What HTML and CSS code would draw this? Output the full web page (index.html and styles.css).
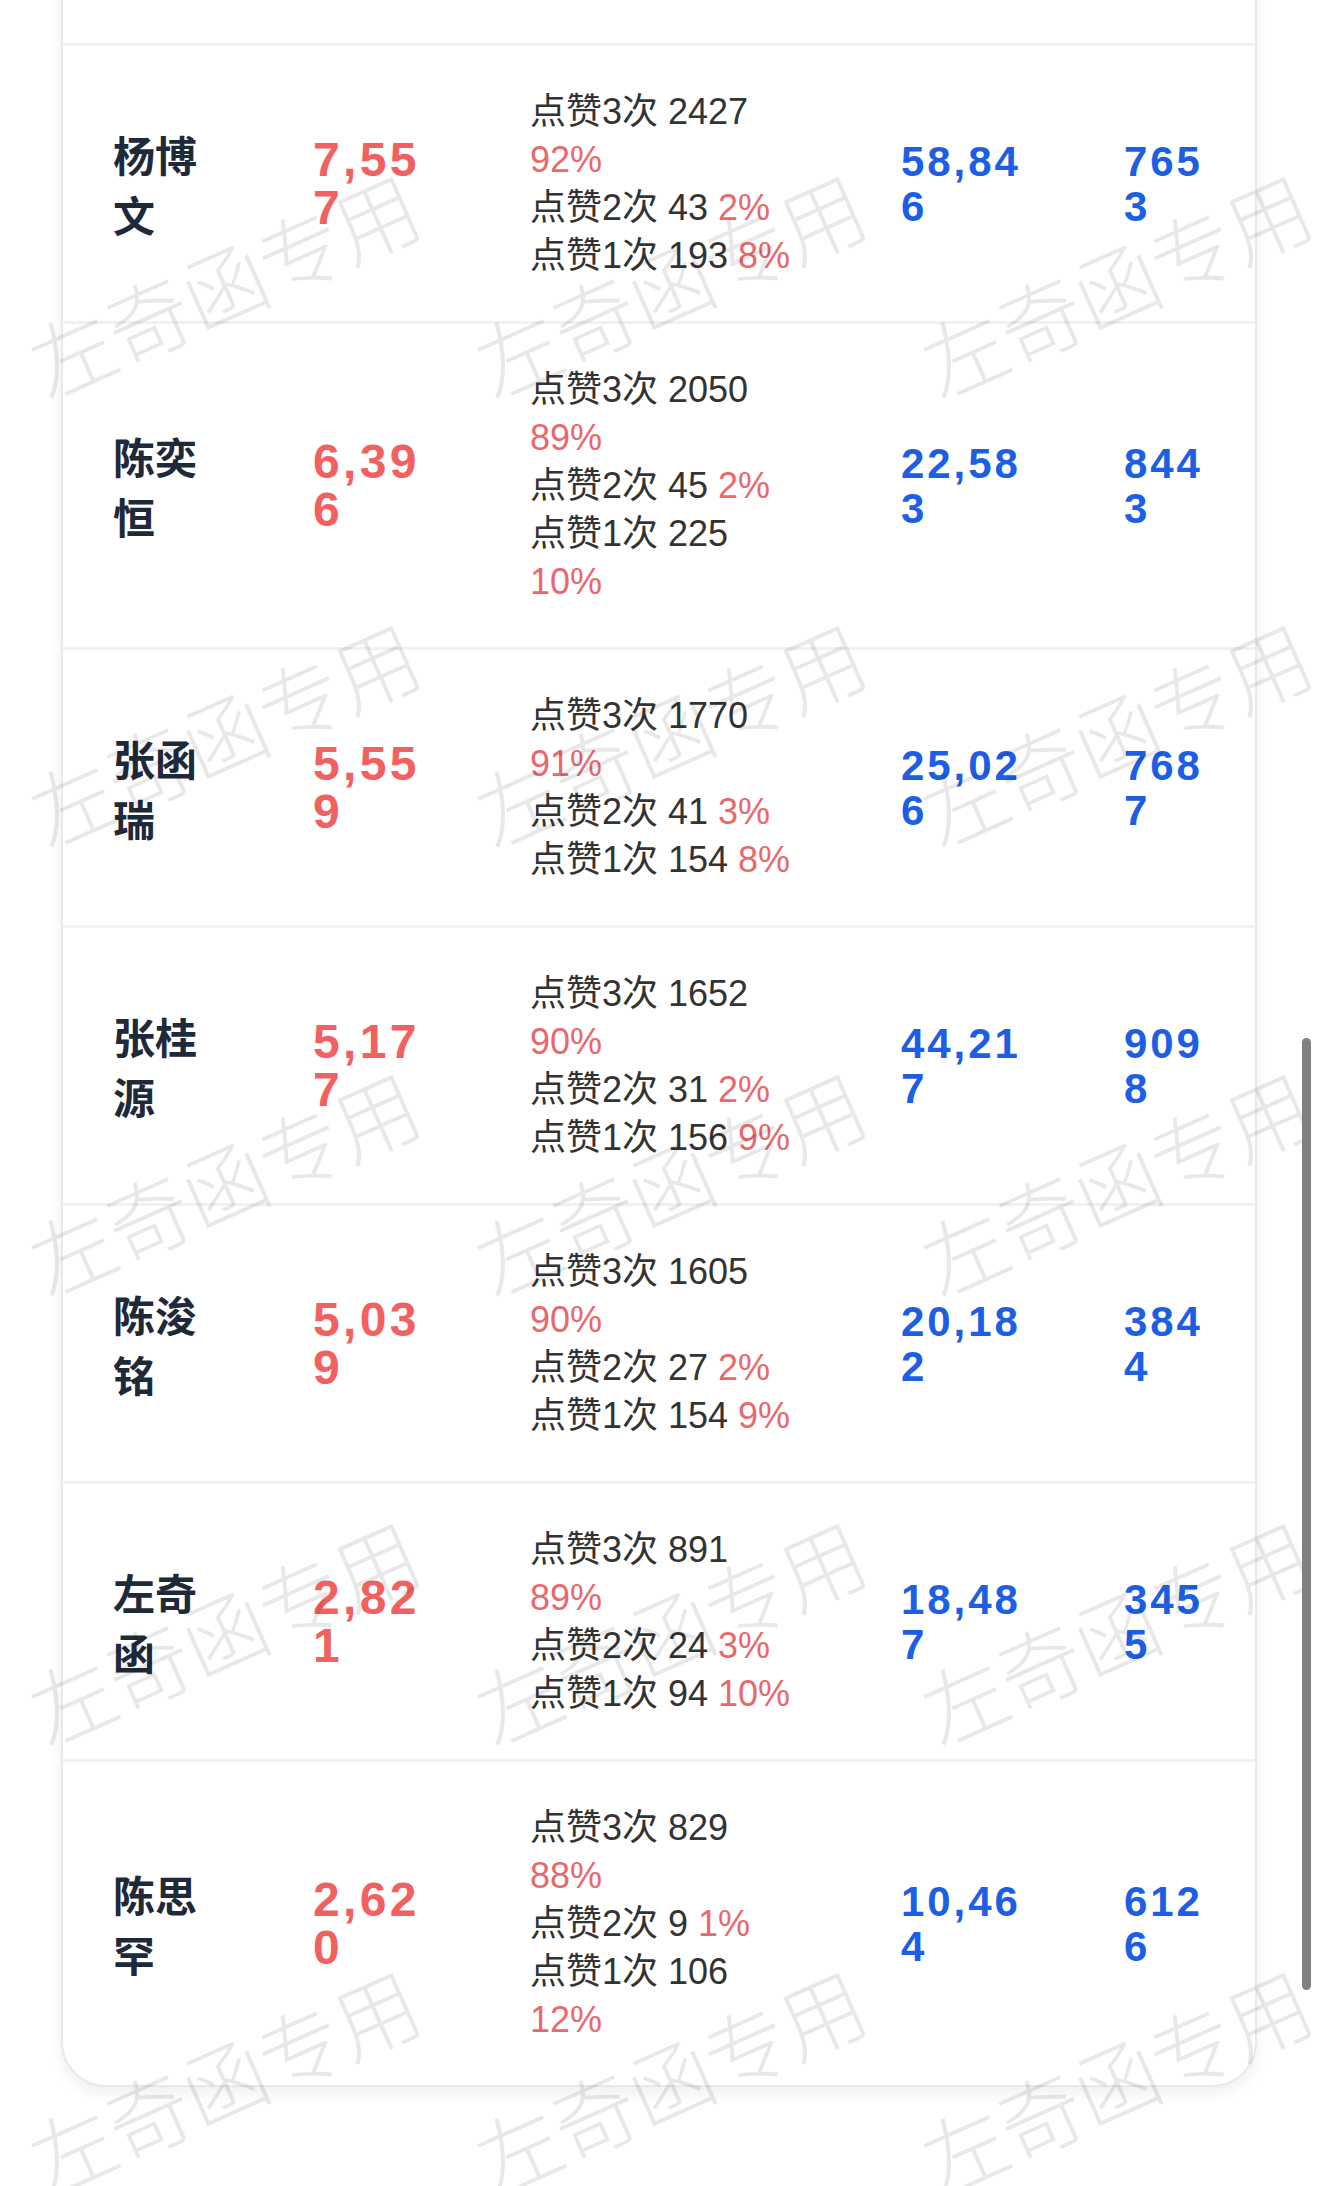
FILE: index.html
```html
<!DOCTYPE html>
<html lang="zh-CN">

<head>
    <meta charset="UTF-8">
    <meta name="viewport" content="width=device-width, initial-scale=1.0">
    <title>点赞统计</title>
    <link rel="stylesheet" href="styles.css">
</head>

<body>
    <div class="page">
        <div class="card">
            <!-- forrige rad, rullet ut av bildet -->
            <div class="row row-cut"></div>

            <div class="row">
                <div class="name">杨博文</div>
                <div class="score">7,557</div>
                <div class="likes">
                    <div>点赞3次 2427 <span class="pct">92%</span></div>
                    <div>点赞2次 43 <span class="pct">2%</span></div>
                    <div>点赞1次 193 <span class="pct">8%</span></div>
                </div>
                <div class="num views">58,846</div>
                <div class="num fans">7653</div>
            </div>

            <div class="row">
                <div class="name">陈奕恒</div>
                <div class="score">6,396</div>
                <div class="likes">
                    <div>点赞3次 2050 <span class="pct">89%</span></div>
                    <div>点赞2次 45 <span class="pct">2%</span></div>
                    <div>点赞1次 225 <span class="pct">10%</span></div>
                </div>
                <div class="num views">22,583</div>
                <div class="num fans">8443</div>
            </div>

            <div class="row">
                <div class="name">张函瑞</div>
                <div class="score">5,559</div>
                <div class="likes">
                    <div>点赞3次 1770 <span class="pct">91%</span></div>
                    <div>点赞2次 41 <span class="pct">3%</span></div>
                    <div>点赞1次 154 <span class="pct">8%</span></div>
                </div>
                <div class="num views">25,026</div>
                <div class="num fans">7687</div>
            </div>

            <div class="row">
                <div class="name">张桂源</div>
                <div class="score">5,177</div>
                <div class="likes">
                    <div>点赞3次 1652 <span class="pct">90%</span></div>
                    <div>点赞2次 31 <span class="pct">2%</span></div>
                    <div>点赞1次 156 <span class="pct">9%</span></div>
                </div>
                <div class="num views">44,217</div>
                <div class="num fans">9098</div>
            </div>

            <div class="row">
                <div class="name">陈浚铭</div>
                <div class="score">5,039</div>
                <div class="likes">
                    <div>点赞3次 1605 <span class="pct">90%</span></div>
                    <div>点赞2次 27 <span class="pct">2%</span></div>
                    <div>点赞1次 154 <span class="pct">9%</span></div>
                </div>
                <div class="num views">20,182</div>
                <div class="num fans">3844</div>
            </div>

            <div class="row">
                <div class="name">左奇函</div>
                <div class="score">2,821</div>
                <div class="likes">
                    <div>点赞3次 891 <span class="pct">89%</span></div>
                    <div>点赞2次 24 <span class="pct">3%</span></div>
                    <div>点赞1次 94 <span class="pct">10%</span></div>
                </div>
                <div class="num views">18,487</div>
                <div class="num fans">3455</div>
            </div>

            <div class="row">
                <div class="name">陈思罕</div>
                <div class="score">2,620</div>
                <div class="likes">
                    <div>点赞3次 829 <span class="pct">88%</span></div>
                    <div>点赞2次 9 <span class="pct">1%</span></div>
                    <div>点赞1次 106 <span class="pct">12%</span></div>
                </div>
                <div class="num views">10,464</div>
                <div class="num fans">6126</div>
            </div>
        </div>

        <!-- vannmerke over hele siden -->
        <div class="watermarks">
            <div class="wm"><span>左奇函专用</span></div>
            <div class="wm"><span>左奇函专用</span></div>
            <div class="wm"><span>左奇函专用</span></div>
            <div class="wm"><span>左奇函专用</span></div>
            <div class="wm"><span>左奇函专用</span></div>
            <div class="wm"><span>左奇函专用</span></div>
            <div class="wm"><span>左奇函专用</span></div>
            <div class="wm"><span>左奇函专用</span></div>
            <div class="wm"><span>左奇函专用</span></div>
            <div class="wm"><span>左奇函专用</span></div>
            <div class="wm"><span>左奇函专用</span></div>
            <div class="wm"><span>左奇函专用</span></div>
            <div class="wm"><span>左奇函专用</span></div>
            <div class="wm"><span>左奇函专用</span></div>
            <div class="wm"><span>左奇函专用</span></div>
        </div>

        <div class="scrollbar"></div>
    </div>
</body>

</html>
```

FILE: styles.css
```css
body {
    margin: 0;
    background: #ffffff;
    font-family: "Liberation Sans", "Noto Sans CJK SC", sans-serif;
}

.page {
    position: relative;
    height: 2186px;
    overflow: hidden;
    padding-left: 61px;
}

.card {
    width: 1192px;
    margin-top: -97px;
    background: #ffffff;
    border: 2px solid #e6e9ee;
    border-radius: 45px;
    box-shadow: 0 6px 14px rgba(15, 23, 42, 0.07);
}

.row {
    display: grid;
    grid-template-columns: 200px 217px 371px 223px 1fr;
    align-items: center;
    padding: 42px 0 41px 50px;
    border-top: 3px solid #eff1f4;
}

.row-cut {
    height: 138px;
    padding: 0;
    border-top: none;
}

.name {
    width: 100px;
    font-family: "Noto Sans CJK SC", sans-serif;
    font-size: 42px;
    line-height: 60px;
    font-weight: 700;
    color: #1e2939;
}

.score {
    width: 125px;
    font-size: 48px;
    line-height: 48px;
    font-weight: 700;
    letter-spacing: 0.07em;
    color: #f2605f;
    word-break: break-all;
}

.likes {
    width: 268px;
    font-size: 36px;
    line-height: 48px;
    color: #333333;
}

.pct {
    color: #e8686c;
}

.num {
    font-size: 42px;
    line-height: 45px;
    font-weight: 700;
    letter-spacing: 0.07em;
    color: #1c5fe5;
    word-break: break-all;
}

.views {
    width: 132px;
}

.fans {
    width: 95px;
}

.watermarks {
    position: absolute;
    top: 0;
    left: 0;
    right: 0;
    bottom: 0;
    display: grid;
    grid-template-columns: repeat(3, 446px);
    grid-auto-rows: 449px;
    padding-top: 58px;
    pointer-events: none;
}

.wm {
    display: flex;
    align-items: center;
    justify-content: center;
}

.wm span {
    font-family: "Noto Sans CJK SC", sans-serif;
    font-size: 84px;
    font-weight: 300;
    letter-spacing: -1px;
    white-space: nowrap;
    color: rgba(0, 0, 0, 0.09);
    transform: rotate(-24deg);
}

.scrollbar {
    position: absolute;
    top: 1038px;
    right: 9px;
    width: 9px;
    height: 952px;
    border-radius: 5px;
    background: #808080;
}
```
